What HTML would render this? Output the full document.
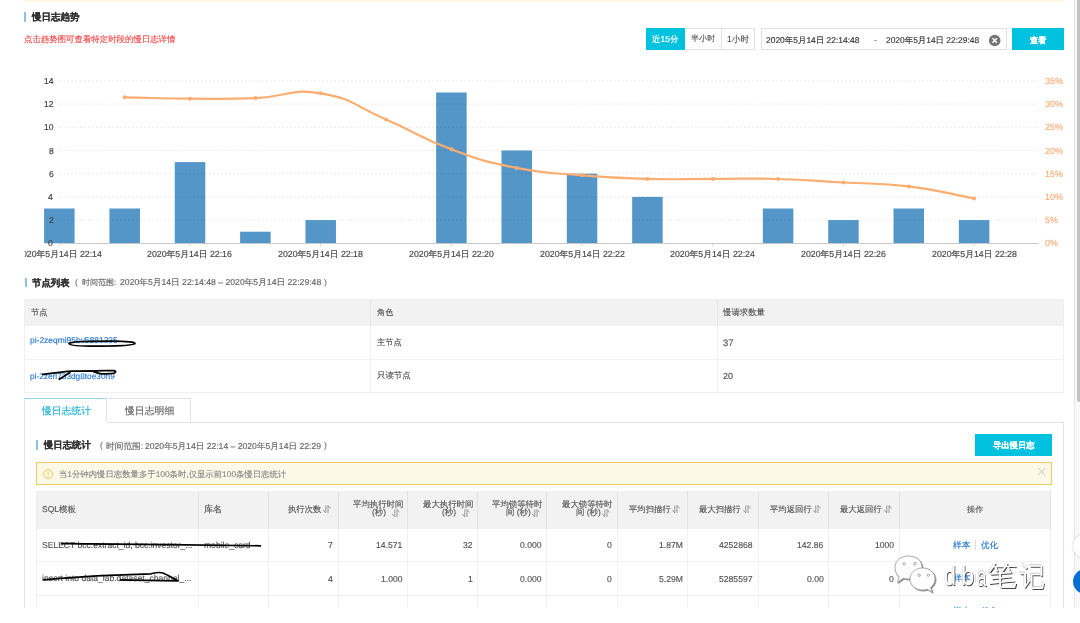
<!DOCTYPE html>
<html><head><meta charset="utf-8">
<style>
*{margin:0;padding:0;box-sizing:border-box}
html,body{width:1080px;height:623px;background:#fff;overflow:hidden}
body{font-family:"Liberation Sans",sans-serif;color:#333;position:relative}
.abs{position:absolute}
#page{position:absolute;left:0;top:0;width:1080px;height:608px;overflow:hidden}
.t{position:absolute;font-size:20px;line-height:20px;white-space:nowrap;transform-origin:0 0;-webkit-text-stroke-width:0.35px;text-rendering:geometricPrecision}
.hl{position:absolute;height:1px}
.vl{position:absolute;width:1px}
</style></head><body>
<div id="page">
<div class="abs" style="left:24px;top:0;width:1040px;height:1.6px;background:#fdf6e4"></div>
<!-- title bar -->
<div class="abs" style="left:24.1px;top:11.8px;width:2px;height:10.4px;background:#90c0ea"></div>
<!-- button group -->
<div class="abs" style="left:646.4px;top:28px;width:38.5px;height:21.9px;background:#00c1de"></div>
<div class="abs" style="left:684.9px;top:28px;width:69.7px;height:21.9px;border:1px solid #e2e2e2;border-left:none"></div>
<div class="vl" style="left:721.4px;top:28px;height:21.9px;background:#e2e2e2"></div>
<!-- date input -->
<div class="abs" style="left:761.3px;top:28px;width:245.4px;height:21.6px;border:1px solid #e0e0e0"></div>
<div class="abs" style="left:874.2px;top:39.6px;width:2.6px;height:0.9px;background:#aaa"></div>
<svg class="abs" style="left:988px;top:33.5px" width="13" height="13" viewBox="0 0 13 13"><circle cx="6.7" cy="6.5" r="5.8" fill="#767676"/><path d="M4.5 4.3 L8.9 8.7 M8.9 4.3 L4.5 8.7" stroke="#fff" stroke-width="1.5"/></svg>
<div class="abs" style="left:1012.2px;top:27.8px;width:51.8px;height:22.2px;background:#00c1de"></div>
<!-- chart -->
<svg class="abs" style="left:0;top:0" width="1080" height="270" viewBox="0 0 1080 270">
<rect x="44.10" y="208.50" width="30.50" height="34.80" fill="#5496c8"/>
<rect x="109.44" y="208.50" width="30.50" height="34.80" fill="#5496c8"/>
<rect x="174.78" y="162.10" width="30.50" height="81.20" fill="#5496c8"/>
<rect x="240.12" y="231.70" width="30.50" height="11.60" fill="#5496c8"/>
<rect x="305.46" y="220.10" width="30.50" height="23.20" fill="#5496c8"/>
<rect x="436.14" y="92.50" width="30.50" height="150.80" fill="#5496c8"/>
<rect x="501.48" y="150.50" width="30.50" height="92.80" fill="#5496c8"/>
<rect x="566.82" y="173.70" width="30.50" height="69.60" fill="#5496c8"/>
<rect x="632.16" y="196.90" width="30.50" height="46.40" fill="#5496c8"/>
<rect x="762.84" y="208.50" width="30.50" height="34.80" fill="#5496c8"/>
<rect x="828.18" y="220.10" width="30.50" height="23.20" fill="#5496c8"/>
<rect x="893.52" y="208.50" width="30.50" height="34.80" fill="#5496c8"/>
<rect x="958.86" y="220.10" width="30.50" height="23.20" fill="#5496c8"/>
<line x1="59.35" y1="80.90" x2="1038.6" y2="80.90" stroke="rgba(0,0,0,0.115)" stroke-width="1" stroke-dasharray="1.5 2.55"/>
<line x1="59.35" y1="104.10" x2="1038.6" y2="104.10" stroke="rgba(0,0,0,0.115)" stroke-width="1" stroke-dasharray="1.5 2.55"/>
<line x1="59.35" y1="127.30" x2="1038.6" y2="127.30" stroke="rgba(0,0,0,0.115)" stroke-width="1" stroke-dasharray="1.5 2.55"/>
<line x1="59.35" y1="150.50" x2="1038.6" y2="150.50" stroke="rgba(0,0,0,0.115)" stroke-width="1" stroke-dasharray="1.5 2.55"/>
<line x1="59.35" y1="173.70" x2="1038.6" y2="173.70" stroke="rgba(0,0,0,0.115)" stroke-width="1" stroke-dasharray="1.5 2.55"/>
<line x1="59.35" y1="196.90" x2="1038.6" y2="196.90" stroke="rgba(0,0,0,0.115)" stroke-width="1" stroke-dasharray="1.5 2.55"/>
<line x1="59.35" y1="220.10" x2="1038.6" y2="220.10" stroke="rgba(0,0,0,0.115)" stroke-width="1" stroke-dasharray="1.5 2.55"/>
<line x1="59.35" y1="243.50" x2="1038.6" y2="243.50" stroke="#c8c8c8" stroke-width="1"/>
<line x1="59.35" y1="243.30" x2="59.35" y2="246.30" stroke="#c8c8c8" stroke-width="0.8"/>
<line x1="190.03" y1="243.30" x2="190.03" y2="246.30" stroke="#c8c8c8" stroke-width="0.8"/>
<line x1="320.71" y1="243.30" x2="320.71" y2="246.30" stroke="#c8c8c8" stroke-width="0.8"/>
<line x1="451.39" y1="243.30" x2="451.39" y2="246.30" stroke="#c8c8c8" stroke-width="0.8"/>
<line x1="582.07" y1="243.30" x2="582.07" y2="246.30" stroke="#c8c8c8" stroke-width="0.8"/>
<line x1="712.75" y1="243.30" x2="712.75" y2="246.30" stroke="#c8c8c8" stroke-width="0.8"/>
<line x1="843.43" y1="243.30" x2="843.43" y2="246.30" stroke="#c8c8c8" stroke-width="0.8"/>
<line x1="974.11" y1="243.30" x2="974.11" y2="246.30" stroke="#c8c8c8" stroke-width="0.8"/>
<path d="M124.69 97.30 C157.36 98.00 157.36 98.50 190.03 98.70 C222.70 98.90 222.74 99.45 255.37 98.10 C288.08 96.75 289.22 88.12 320.71 93.30 C354.56 98.87 353.69 105.73 386.05 119.60 C419.03 133.73 417.82 136.89 451.39 149.30 C483.16 161.04 483.53 161.29 516.73 167.90 C548.87 174.29 549.32 172.54 582.07 175.30 C614.66 178.04 614.72 178.00 647.41 178.90 C680.06 179.80 680.08 178.88 712.75 178.90 C745.42 178.93 745.44 178.10 778.09 179.00 C810.78 179.90 810.77 180.65 843.43 182.50 C876.11 184.35 876.34 182.45 908.77 186.40 C941.68 190.40 941.44 192.40 974.11 198.40" fill="none" stroke="#fcad70" stroke-width="2.2" stroke-linejoin="round"/>
<circle cx="124.69" cy="97.30" r="2" fill="#fcad70"/>
<circle cx="190.03" cy="98.70" r="2" fill="#fcad70"/>
<circle cx="255.37" cy="98.10" r="2" fill="#fcad70"/>
<circle cx="320.71" cy="93.30" r="2" fill="#fcad70"/>
<circle cx="386.05" cy="119.60" r="2" fill="#fcad70"/>
<circle cx="451.39" cy="149.30" r="2" fill="#fcad70"/>
<circle cx="516.73" cy="167.90" r="2" fill="#fcad70"/>
<circle cx="582.07" cy="175.30" r="2" fill="#fcad70"/>
<circle cx="647.41" cy="178.90" r="2" fill="#fcad70"/>
<circle cx="712.75" cy="178.90" r="2" fill="#fcad70"/>
<circle cx="778.09" cy="179.00" r="2" fill="#fcad70"/>
<circle cx="843.43" cy="182.50" r="2" fill="#fcad70"/>
<circle cx="908.77" cy="186.40" r="2" fill="#fcad70"/>
<circle cx="974.11" cy="198.40" r="2" fill="#fcad70"/>
</svg>
<!-- node list -->
<div class="abs" style="left:24.6px;top:277.8px;width:2px;height:9.5px;background:#90c0ea"></div>
<div class="abs" style="left:24px;top:298.9px;width:1039.5px;height:27.1px;background:#f2f2f2"></div>
<div class="abs" style="left:24px;top:298.9px;width:1039.5px;height:94px;border:1px solid #efefef;border-top:none"></div>
<div class="vl" style="left:370px;top:298.9px;height:27.1px;background:#e6e6e6"></div><div class="vl" style="left:370px;top:326px;height:66px;background:#f1f1f1"></div>
<div class="vl" style="left:716.8px;top:298.9px;height:27.1px;background:#e6e6e6"></div><div class="vl" style="left:716.8px;top:326px;height:66px;background:#f1f1f1"></div>
<div class="hl" style="left:24px;top:358.6px;width:1039.5px;background:#f2f2f2"></div>
<!-- tabs -->
<div class="abs" style="left:24.2px;top:398.3px;width:83.3px;height:24px;border:1px solid #e3e3e3;border-bottom:none;background:#fff"></div>
<div class="abs" style="left:24.2px;top:398.1px;width:83.3px;height:1.4px;background:#8edcee"></div>
<div class="abs" style="left:107.5px;top:398.3px;width:83.8px;height:24.4px;border:1px solid #e3e3e3;border-left:none"></div>
<div class="hl" style="left:191.3px;top:421.7px;width:872.3px;background:#e3e3e3"></div>
<!-- card -->
<div class="abs" style="left:24.2px;top:421.7px;width:1039.5px;height:300px;border:1px solid #e3e3e3;border-top:none"></div>
<div class="abs" style="left:36.1px;top:440.3px;width:2px;height:9.7px;background:#90c0ea"></div>
<div class="abs" style="left:975.1px;top:433.8px;width:76.9px;height:22.1px;background:#00c1de"></div>
<!-- alert -->
<div class="abs" style="left:36px;top:461.8px;width:1015.5px;height:23.4px;border:1px solid #f1c863;background:#fdf9e8"></div>
<svg class="abs" style="left:42px;top:467.5px" width="12" height="12" viewBox="0 0 12 12"><circle cx="6.1" cy="6" r="4.4" fill="none" stroke="#f6c444" stroke-width="1"/><path d="M6.1 3.6 V6.7 M6.1 7.6 V8.5" stroke="#f6c444" stroke-width="1"/></svg>
<svg class="abs" style="left:1037px;top:467px" width="10" height="10" viewBox="0 0 10 10"><path d="M1.2 1.3 L8 8 M8 1.3 L1.2 8" stroke="#b8b8b8" stroke-width="0.9"/></svg>
<!-- main table -->
<div class="abs" style="left:35.9px;top:491.4px;width:1015.6px;height:37.2px;background:#f2f2f2"></div>
<div class="hl" style="left:35.9px;top:561px;width:1015.6px;background:#f1f1f1"></div>
<div class="hl" style="left:35.9px;top:595px;width:1015.6px;background:#f1f1f1"></div>
<div class="vl" style="left:36px;top:491.4px;height:130px;background:#eeeeee"></div>
<div class="vl" style="left:198.1px;top:491.4px;height:37.3px;background:#e2e2e2"></div><div class="vl" style="left:198.1px;top:528.7px;height:90px;background:#f1f1f1"></div>
<div class="vl" style="left:268.0px;top:491.4px;height:37.3px;background:#e2e2e2"></div><div class="vl" style="left:268.0px;top:528.7px;height:90px;background:#f1f1f1"></div>
<div class="vl" style="left:337.6px;top:491.4px;height:37.3px;background:#e2e2e2"></div><div class="vl" style="left:337.6px;top:528.7px;height:90px;background:#f1f1f1"></div>
<div class="vl" style="left:406.9px;top:491.4px;height:37.3px;background:#e2e2e2"></div><div class="vl" style="left:406.9px;top:528.7px;height:90px;background:#f1f1f1"></div>
<div class="vl" style="left:476.9px;top:491.4px;height:37.3px;background:#e2e2e2"></div><div class="vl" style="left:476.9px;top:528.7px;height:90px;background:#f1f1f1"></div>
<div class="vl" style="left:546.4px;top:491.4px;height:37.3px;background:#e2e2e2"></div><div class="vl" style="left:546.4px;top:528.7px;height:90px;background:#f1f1f1"></div>
<div class="vl" style="left:616.6px;top:491.4px;height:37.3px;background:#e2e2e2"></div><div class="vl" style="left:616.6px;top:528.7px;height:90px;background:#f1f1f1"></div>
<div class="vl" style="left:687.1px;top:491.4px;height:37.3px;background:#e2e2e2"></div><div class="vl" style="left:687.1px;top:528.7px;height:90px;background:#f1f1f1"></div>
<div class="vl" style="left:757.6px;top:491.4px;height:37.3px;background:#e2e2e2"></div><div class="vl" style="left:757.6px;top:528.7px;height:90px;background:#f1f1f1"></div>
<div class="vl" style="left:828.1px;top:491.4px;height:37.3px;background:#e2e2e2"></div><div class="vl" style="left:828.1px;top:528.7px;height:90px;background:#f1f1f1"></div>
<div class="vl" style="left:898.6px;top:491.4px;height:37.3px;background:#e2e2e2"></div><div class="vl" style="left:898.6px;top:528.7px;height:90px;background:#f1f1f1"></div>
<div class="vl" style="left:1050.4px;top:491.4px;height:37.3px;background:#e2e2e2"></div><div class="vl" style="left:1050.4px;top:528.7px;height:90px;background:#f1f1f1"></div>
<div class="vl" style="left:975.3px;top:540px;height:9.5px;background:#dcdcdc"></div>
<div class="vl" style="left:975.3px;top:573.5px;height:9.5px;background:#dcdcdc"></div>
<div class="t" style="left:32.38px;top:12.37px;transform:scale(0.4752,0.4752);color:#333;font-weight:bold;-webkit-text-stroke-width:0.5px;">慢日志趋势</div>
<div class="t" style="left:23.96px;top:34.91px;transform:scale(0.4207,0.4207);color:#f04a4a;">点击趋势图可查看特定时段的慢日志详情</div>
<div class="t" style="left:652.48px;top:34.86px;transform:scale(0.4250,0.4250);color:#fff;">近15分</div>
<div class="t" style="left:691.20px;top:35.30px;transform:scale(0.4051,0.4051);color:#555;">半小时</div>
<div class="t" style="left:727.47px;top:35.07px;transform:scale(0.4306,0.4306);color:#555;">1小时</div>
<div class="t" style="left:766.48px;top:35.59px;transform:scale(0.4223,0.4223);color:#333;">2020年5月14日 22:14:48</div>
<div class="t" style="left:886.28px;top:35.75px;transform:scale(0.4209,0.4209);color:#333;">2020年5月14日 22:29:48</div>
<div class="t" style="left:1029.60px;top:35.83px;transform:scale(0.4075,0.4075);color:#fff;font-weight:bold;">查看</div>
<div class="t" style="left:48.47px;top:239.43px;transform:scale(0.4300,0.4300);color:#444;-webkit-text-stroke-width:0.4px;">0</div>
<div class="t" style="left:1044.86px;top:239.30px;transform:scale(0.4450,0.4450);color:#f7ae78;">0%</div>
<div class="t" style="left:48.90px;top:216.23px;transform:scale(0.4300,0.4300);color:#444;-webkit-text-stroke-width:0.4px;">2</div>
<div class="t" style="left:1044.86px;top:216.10px;transform:scale(0.4450,0.4450);color:#f7ae78;">5%</div>
<div class="t" style="left:48.47px;top:193.03px;transform:scale(0.4300,0.4300);color:#444;-webkit-text-stroke-width:0.4px;">4</div>
<div class="t" style="left:1044.86px;top:192.90px;transform:scale(0.4450,0.4450);color:#f7ae78;">10%</div>
<div class="t" style="left:48.90px;top:169.83px;transform:scale(0.4300,0.4300);color:#444;-webkit-text-stroke-width:0.4px;">6</div>
<div class="t" style="left:1044.86px;top:169.70px;transform:scale(0.4450,0.4450);color:#f7ae78;">15%</div>
<div class="t" style="left:48.90px;top:146.63px;transform:scale(0.4300,0.4300);color:#444;-webkit-text-stroke-width:0.4px;">8</div>
<div class="t" style="left:1044.86px;top:146.50px;transform:scale(0.4450,0.4450);color:#f7ae78;">20%</div>
<div class="t" style="left:43.74px;top:123.43px;transform:scale(0.4300,0.4300);color:#444;-webkit-text-stroke-width:0.4px;">10</div>
<div class="t" style="left:1044.86px;top:123.30px;transform:scale(0.4450,0.4450);color:#f7ae78;">25%</div>
<div class="t" style="left:44.17px;top:100.23px;transform:scale(0.4300,0.4300);color:#444;-webkit-text-stroke-width:0.4px;">12</div>
<div class="t" style="left:1044.86px;top:100.10px;transform:scale(0.4450,0.4450);color:#f7ae78;">30%</div>
<div class="t" style="left:43.74px;top:77.03px;transform:scale(0.4300,0.4300);color:#444;-webkit-text-stroke-width:0.4px;">14</div>
<div class="t" style="left:1044.86px;top:76.90px;transform:scale(0.4450,0.4450);color:#f7ae78;">35%</div>
<div class="t" style="left:16.81px;top:250.18px;transform:scale(0.4385,0.4385);color:#4a4a4a;-webkit-text-stroke-width:0.4px;clip-path:inset(0 0 0 17.30px);">2020年5月14日 22:14</div>
<div class="t" style="left:147.49px;top:250.18px;transform:scale(0.4385,0.4385);color:#4a4a4a;-webkit-text-stroke-width:0.4px;">2020年5月14日 22:16</div>
<div class="t" style="left:278.17px;top:250.18px;transform:scale(0.4385,0.4385);color:#4a4a4a;-webkit-text-stroke-width:0.4px;">2020年5月14日 22:18</div>
<div class="t" style="left:408.85px;top:250.18px;transform:scale(0.4385,0.4385);color:#4a4a4a;-webkit-text-stroke-width:0.4px;">2020年5月14日 22:20</div>
<div class="t" style="left:539.53px;top:250.18px;transform:scale(0.4385,0.4385);color:#4a4a4a;-webkit-text-stroke-width:0.4px;">2020年5月14日 22:22</div>
<div class="t" style="left:670.21px;top:250.18px;transform:scale(0.4385,0.4385);color:#4a4a4a;-webkit-text-stroke-width:0.4px;">2020年5月14日 22:24</div>
<div class="t" style="left:800.89px;top:250.18px;transform:scale(0.4385,0.4385);color:#4a4a4a;-webkit-text-stroke-width:0.4px;">2020年5月14日 22:26</div>
<div class="t" style="left:931.57px;top:250.18px;transform:scale(0.4385,0.4385);color:#4a4a4a;-webkit-text-stroke-width:0.4px;">2020年5月14日 22:28</div>
<div class="t" style="left:32.20px;top:277.70px;transform:scale(0.4688,0.4688);color:#333;font-weight:bold;-webkit-text-stroke-width:0.5px;">节点列表</div>
<div class="t" style="left:75.27px;top:278.29px;transform:scale(0.4300,0.4300);color:#777;">(</div>
<div class="t" style="left:81.80px;top:279.09px;transform:scale(0.4012,0.4012);color:#666;">时间范围:</div>
<div class="t" style="left:120.27px;top:278.49px;transform:scale(0.4330,0.4330);color:#666;">2020年5月14日 22:14:48 – 2020年5月14日 22:29:48</div>
<div class="t" style="left:324.47px;top:278.29px;transform:scale(0.4300,0.4300);color:#777;">)</div>
<div class="t" style="left:30.90px;top:307.95px;transform:scale(0.4154,0.4154);color:#555;">节点</div>
<div class="t" style="left:377.30px;top:307.88px;transform:scale(0.4075,0.4075);color:#555;">角色</div>
<div class="t" style="left:723.30px;top:307.97px;transform:scale(0.4202,0.4202);color:#555;">慢请求数量</div>
<div class="t" style="left:30.48px;top:336.37px;transform:scale(0.4218,0.4218);color:#2a79d0;">pi-2zeqmi95bv5881235</div>
<div class="t" style="left:377.30px;top:338.26px;transform:scale(0.4153,0.4153);color:#555;">主节点</div>
<div class="t" style="left:722.83px;top:338.02px;transform:scale(0.4700,0.4700);color:#555;">37</div>
<div class="t" style="left:30.49px;top:371.80px;transform:scale(0.4143,0.4143);color:#2a79d0;">pi-2zerl733dg8toe30n9</div>
<div class="t" style="left:376.88px;top:371.40px;transform:scale(0.4218,0.4218);color:#555;">只读节点</div>
<div class="t" style="left:722.85px;top:371.62px;transform:scale(0.4476,0.4476);color:#555;">20</div>
<div class="t" style="left:41.70px;top:406.38px;transform:scale(0.4910,0.4910);color:#1fb4d9;">慢日志统计</div>
<div class="t" style="left:125.00px;top:406.36px;transform:scale(0.4929,0.4929);color:#666;">慢日志明细</div>
<div class="t" style="left:44.37px;top:441.29px;transform:scale(0.4673,0.4673);color:#333;font-weight:bold;-webkit-text-stroke-width:0.5px;">慢日志统计</div>
<div class="t" style="left:100.37px;top:441.49px;transform:scale(0.4300,0.4300);color:#777;">(</div>
<div class="t" style="left:105.97px;top:441.99px;transform:scale(0.4349,0.4349);color:#666;">时间范围:</div>
<div class="t" style="left:144.87px;top:441.72px;transform:scale(0.4300,0.4300);color:#666;">2020年5月14日 22:14 – 2020年5月14日 22:29</div>
<div class="t" style="left:323.97px;top:441.49px;transform:scale(0.4300,0.4300);color:#777;">)</div>
<div class="t" style="left:992.80px;top:440.91px;transform:scale(0.4160,0.4160);color:#fff;font-weight:bold;">导出慢日志</div>
<div class="t" style="left:59.46px;top:469.99px;transform:scale(0.4181,0.4181);color:#888;">当1分钟内慢日志数量多于100条时,仅显示前100条慢日志统计</div>
<div class="t" style="left:42.18px;top:504.72px;transform:scale(0.4231,0.4231);color:#555;">SQL模板</div>
<div class="t" style="left:204.35px;top:505.10px;transform:scale(0.4528,0.4528);color:#555;">库名</div>
<div class="t" style="left:288.00px;top:505.19px;transform:scale(0.4177,0.4177);color:#555;">执行次数</div>
<div class="t" style="left:628.80px;top:504.84px;transform:scale(0.4170,0.4170);color:#555;">平均扫描行</div>
<div class="t" style="left:699.30px;top:505.05px;transform:scale(0.4170,0.4170);color:#555;">最大扫描行</div>
<div class="t" style="left:769.80px;top:504.84px;transform:scale(0.4170,0.4170);color:#555;">平均返回行</div>
<div class="t" style="left:840.30px;top:505.05px;transform:scale(0.4170,0.4170);color:#555;">最大返回行</div>
<div class="t" style="left:352.54px;top:499.87px;transform:scale(0.4200,0.4200);color:#555;">平均执行时间</div>
<div class="t" style="left:371.56px;top:508.35px;transform:scale(0.4200,0.4200);color:#555;">(秒)</div>
<div class="t" style="left:422.54px;top:499.87px;transform:scale(0.4200,0.4200);color:#555;">最大执行时间</div>
<div class="t" style="left:441.56px;top:508.35px;transform:scale(0.4200,0.4200);color:#555;">(秒)</div>
<div class="t" style="left:491.62px;top:499.87px;transform:scale(0.4200,0.4200);color:#555;">平均锁等待时</div>
<div class="t" style="left:505.84px;top:508.35px;transform:scale(0.4200,0.4200);color:#555;">间 (秒)</div>
<div class="t" style="left:561.62px;top:499.87px;transform:scale(0.4200,0.4200);color:#555;">最大锁等待时</div>
<div class="t" style="left:575.84px;top:508.35px;transform:scale(0.4200,0.4200);color:#555;">间 (秒)</div>
<div class="t" style="left:967.40px;top:505.23px;transform:scale(0.4075,0.4075);color:#555;">操作</div>
<div class="t" style="left:42.27px;top:540.51px;transform:scale(0.4275,0.4275);color:#555;">SELECT bcc.extract_id, bcc.investor_...</div>
<div class="t" style="left:204.47px;top:541.11px;transform:scale(0.4275,0.4275);color:#555;">mobile_card</div>
<div class="t" style="left:328.20px;top:541.13px;transform:scale(0.4300,0.4300);color:#555;">7</div>
<div class="t" style="left:376.20px;top:541.13px;transform:scale(0.4300,0.4300);color:#555;">14.571</div>
<div class="t" style="left:462.97px;top:541.13px;transform:scale(0.4300,0.4300);color:#555;">32</div>
<div class="t" style="left:520.00px;top:541.13px;transform:scale(0.4300,0.4300);color:#555;">0.000</div>
<div class="t" style="left:606.77px;top:541.13px;transform:scale(0.4300,0.4300);color:#555;">0</div>
<div class="t" style="left:658.78px;top:541.13px;transform:scale(0.4300,0.4300);color:#555;">1.87M</div>
<div class="t" style="left:719.39px;top:541.13px;transform:scale(0.4300,0.4300);color:#555;">4252868</div>
<div class="t" style="left:797.20px;top:541.13px;transform:scale(0.4300,0.4300);color:#555;">142.86</div>
<div class="t" style="left:874.58px;top:541.13px;transform:scale(0.4300,0.4300);color:#555;">1000</div>
<div class="t" style="left:953.30px;top:540.92px;transform:scale(0.4385,0.4385);color:#2a79d0;">样本</div>
<div class="t" style="left:980.70px;top:540.59px;transform:scale(0.4275,0.4275);color:#2a79d0;">优化</div>
<div class="t" style="left:42.27px;top:574.01px;transform:scale(0.4275,0.4275);color:#555;">insert into data_lab.dataset_channel_...</div>
<div class="t" style="left:327.77px;top:574.63px;transform:scale(0.4300,0.4300);color:#555;">4</div>
<div class="t" style="left:380.50px;top:574.63px;transform:scale(0.4300,0.4300);color:#555;">1.000</div>
<div class="t" style="left:467.70px;top:574.63px;transform:scale(0.4300,0.4300);color:#555;">1</div>
<div class="t" style="left:520.00px;top:574.63px;transform:scale(0.4300,0.4300);color:#555;">0.000</div>
<div class="t" style="left:606.77px;top:574.63px;transform:scale(0.4300,0.4300);color:#555;">0</div>
<div class="t" style="left:658.78px;top:574.63px;transform:scale(0.4300,0.4300);color:#555;">5.29M</div>
<div class="t" style="left:719.39px;top:574.63px;transform:scale(0.4300,0.4300);color:#555;">5285597</div>
<div class="t" style="left:806.66px;top:574.63px;transform:scale(0.4300,0.4300);color:#555;">0.00</div>
<div class="t" style="left:888.77px;top:574.63px;transform:scale(0.4300,0.4300);color:#555;">0</div>
<div class="t" style="left:953.30px;top:574.42px;transform:scale(0.4385,0.4385);color:#2a79d0;">样本</div>
<div class="t" style="left:953.30px;top:606.97px;transform:scale(0.4385,0.4385);color:#2a79d0;">样本</div>
<div class="t" style="left:980.70px;top:606.64px;transform:scale(0.4275,0.4275);color:#2a79d0;">优化</div>
<div class="t" style="left:943.52px;top:563.31px;transform:scale(1.0778,1.3867);color:#fff;-webkit-text-stroke-width:0;text-shadow:0.65px 0.65px 0.35px rgba(50,50,50,0.9),-0.3px -0.3px 0.4px rgba(0,0,0,0.22);">d</div>
<div class="t" style="left:960.71px;top:563.31px;transform:scale(1.1889,1.3867);color:#fff;-webkit-text-stroke-width:0;text-shadow:0.65px 0.65px 0.35px rgba(50,50,50,0.9),-0.3px -0.3px 0.4px rgba(0,0,0,0.22);">b</div>
<div class="t" style="left:976.84px;top:563.68px;transform:scale(0.8600,1.3636);color:#fff;-webkit-text-stroke-width:0;text-shadow:0.65px 0.65px 0.35px rgba(50,50,50,0.9),-0.3px -0.3px 0.4px rgba(0,0,0,0.22);">a</div>
<div class="t" style="left:987.40px;top:563.10px;transform:scale(1.5000,1.3889);color:#fff;-webkit-text-stroke-width:0;text-shadow:0.65px 0.65px 0.35px rgba(50,50,50,0.9),-0.3px -0.3px 0.4px rgba(0,0,0,0.22);">笔</div>
<div class="t" style="left:1020.40px;top:563.50px;transform:scale(1.2632,1.3667);color:#fff;-webkit-text-stroke-width:0;text-shadow:0.65px 0.65px 0.35px rgba(50,50,50,0.9),-0.3px -0.3px 0.4px rgba(0,0,0,0.22);">记</div>
<svg class="abs" style="left:322.50px;top:505.00px" width="8" height="9" viewBox="0 0 8 9"><path d="M2.8 0.4 V7.9 L0.2 5.0 M5.0 8.0 V0.5 L7.5 3.4" fill="none" stroke="#8f8f8f" stroke-width="0.9"/></svg>
<svg class="abs" style="left:672.30px;top:505.00px" width="8" height="9" viewBox="0 0 8 9"><path d="M2.8 0.4 V7.9 L0.2 5.0 M5.0 8.0 V0.5 L7.5 3.4" fill="none" stroke="#8f8f8f" stroke-width="0.9"/></svg>
<svg class="abs" style="left:742.80px;top:505.00px" width="8" height="9" viewBox="0 0 8 9"><path d="M2.8 0.4 V7.9 L0.2 5.0 M5.0 8.0 V0.5 L7.5 3.4" fill="none" stroke="#8f8f8f" stroke-width="0.9"/></svg>
<svg class="abs" style="left:813.30px;top:505.00px" width="8" height="9" viewBox="0 0 8 9"><path d="M2.8 0.4 V7.9 L0.2 5.0 M5.0 8.0 V0.5 L7.5 3.4" fill="none" stroke="#8f8f8f" stroke-width="0.9"/></svg>
<svg class="abs" style="left:883.80px;top:505.00px" width="8" height="9" viewBox="0 0 8 9"><path d="M2.8 0.4 V7.9 L0.2 5.0 M5.0 8.0 V0.5 L7.5 3.4" fill="none" stroke="#8f8f8f" stroke-width="0.9"/></svg>
<svg class="abs" style="left:392.30px;top:508.60px" width="8" height="9" viewBox="0 0 8 9"><path d="M2.8 0.4 V7.9 L0.2 5.0 M5.0 8.0 V0.5 L7.5 3.4" fill="none" stroke="#8f8f8f" stroke-width="0.9"/></svg>
<svg class="abs" style="left:462.30px;top:508.60px" width="8" height="9" viewBox="0 0 8 9"><path d="M2.8 0.4 V7.9 L0.2 5.0 M5.0 8.0 V0.5 L7.5 3.4" fill="none" stroke="#8f8f8f" stroke-width="0.9"/></svg>
<svg class="abs" style="left:531.80px;top:508.60px" width="8" height="9" viewBox="0 0 8 9"><path d="M2.8 0.4 V7.9 L0.2 5.0 M5.0 8.0 V0.5 L7.5 3.4" fill="none" stroke="#8f8f8f" stroke-width="0.9"/></svg>
<svg class="abs" style="left:601.80px;top:508.60px" width="8" height="9" viewBox="0 0 8 9"><path d="M2.8 0.4 V7.9 L0.2 5.0 M5.0 8.0 V0.5 L7.5 3.4" fill="none" stroke="#8f8f8f" stroke-width="0.9"/></svg>
<!-- scribbles -->
<svg class="abs" style="left:0;top:0" width="1080" height="608" viewBox="0 0 1080 608">
<g fill="none" stroke="#000" stroke-linecap="round" stroke-linejoin="round">
<path d="M69 343.6 C71 341.6 95 341.1 112 341.2 C127 341.3 135.5 342.2 135 343.6 C134.5 345.3 118 346.1 100 346.2 C84 346.3 69.5 345.5 69 343.6 Z" stroke-width="1.7"/>
<path d="M42.7 374.3 C50 373.5 56 372.8 61.3 372.2 C66 371.6 70 371.3 73 371.2 C82 370.9 90 370.8 96.3 370.8 C104 370.7 110 370.4 114 370.6 C116.5 371 116 372.8 113 373.4 C108 374 102 373.9 99 373.3 C97 372.9 95.5 372.2 94 371.8 M59.4 379.2 C63 377 67 374.5 69.9 372.6" stroke-width="1.8"/>
<path d="M61.6 543.6 C120 544.2 200 545 260.4 545.8" stroke-width="1.7"/>
<path d="M43.8 579.8 C65 578 90 576 109 575.3 C125 574.6 140 574.2 151 573.8 C156 572.5 160 572 163 573 C168 575 173 578.5 178.2 580.9 C160 580.6 140 580.2 120.4 579.9" stroke-width="1.7"/>
</g></svg>
<!-- watermark -->
<svg class="abs" style="left:880px;top:548px" width="64" height="50" viewBox="880 548 64 50">
<defs><filter id="sh" x="-20%" y="-20%" width="140%" height="140%"><feDropShadow dx="0.8" dy="0.8" stdDeviation="0.5" flood-color="#444" flood-opacity="0.8"/></filter></defs>
<g filter="url(#sh)">
<path d="M908.5 556 C916.5 556 922 561 922 567.3 C922 573.8 916.5 579 908.5 579 C906.5 579 904.8 578.7 903.2 578.2 L897.5 582.5 L899.2 576.8 C896.5 574.6 895 571.2 895 567.3 C895 561 900.5 556 908.5 556 Z" fill="#fff" stroke="#9a9a9a" stroke-width="0.8"/>
<path d="M922.5 568 C929.5 568 935 572.8 935 579 C935 582.5 933.3 585.5 930.6 587.6 L932.3 592.3 L927.4 589.2 C925.9 589.7 924.2 590 922.5 590 C915.5 590 910 585.2 910 579 C910 572.8 915.5 568 922.5 568 Z" fill="#fff" stroke="#9a9a9a" stroke-width="0.8"/>
</g>
<g fill="#fff" stroke="#8a8a8a" stroke-width="0.7"><circle cx="904.2" cy="563.7" r="1.3"/><circle cx="915" cy="563.7" r="1.3"/><circle cx="919.2" cy="575.2" r="1.2"/><circle cx="928.3" cy="575.2" r="1.2"/></g>
</svg>
<!-- scrollbar / float buttons -->
<div class="abs" style="left:1073.8px;top:0;width:6.2px;height:608px;background:#f8f8f8;border-left:1px solid #e6e6e6"></div>
<div class="abs" style="left:1076.6px;top:-4px;width:5px;height:405.5px;background:#c2c2c2;border-radius:2.5px"></div>
<div class="abs" style="left:1072.5px;top:534px;width:24px;height:24px;border-radius:50%;background:#fff;box-shadow:0 0 2px rgba(0,0,0,0.25)"></div>
<div class="abs" style="left:1073px;top:568.8px;width:25.2px;height:25.2px;border-radius:50%;background:#0b6fd1"></div>
</div>
</body></html>
